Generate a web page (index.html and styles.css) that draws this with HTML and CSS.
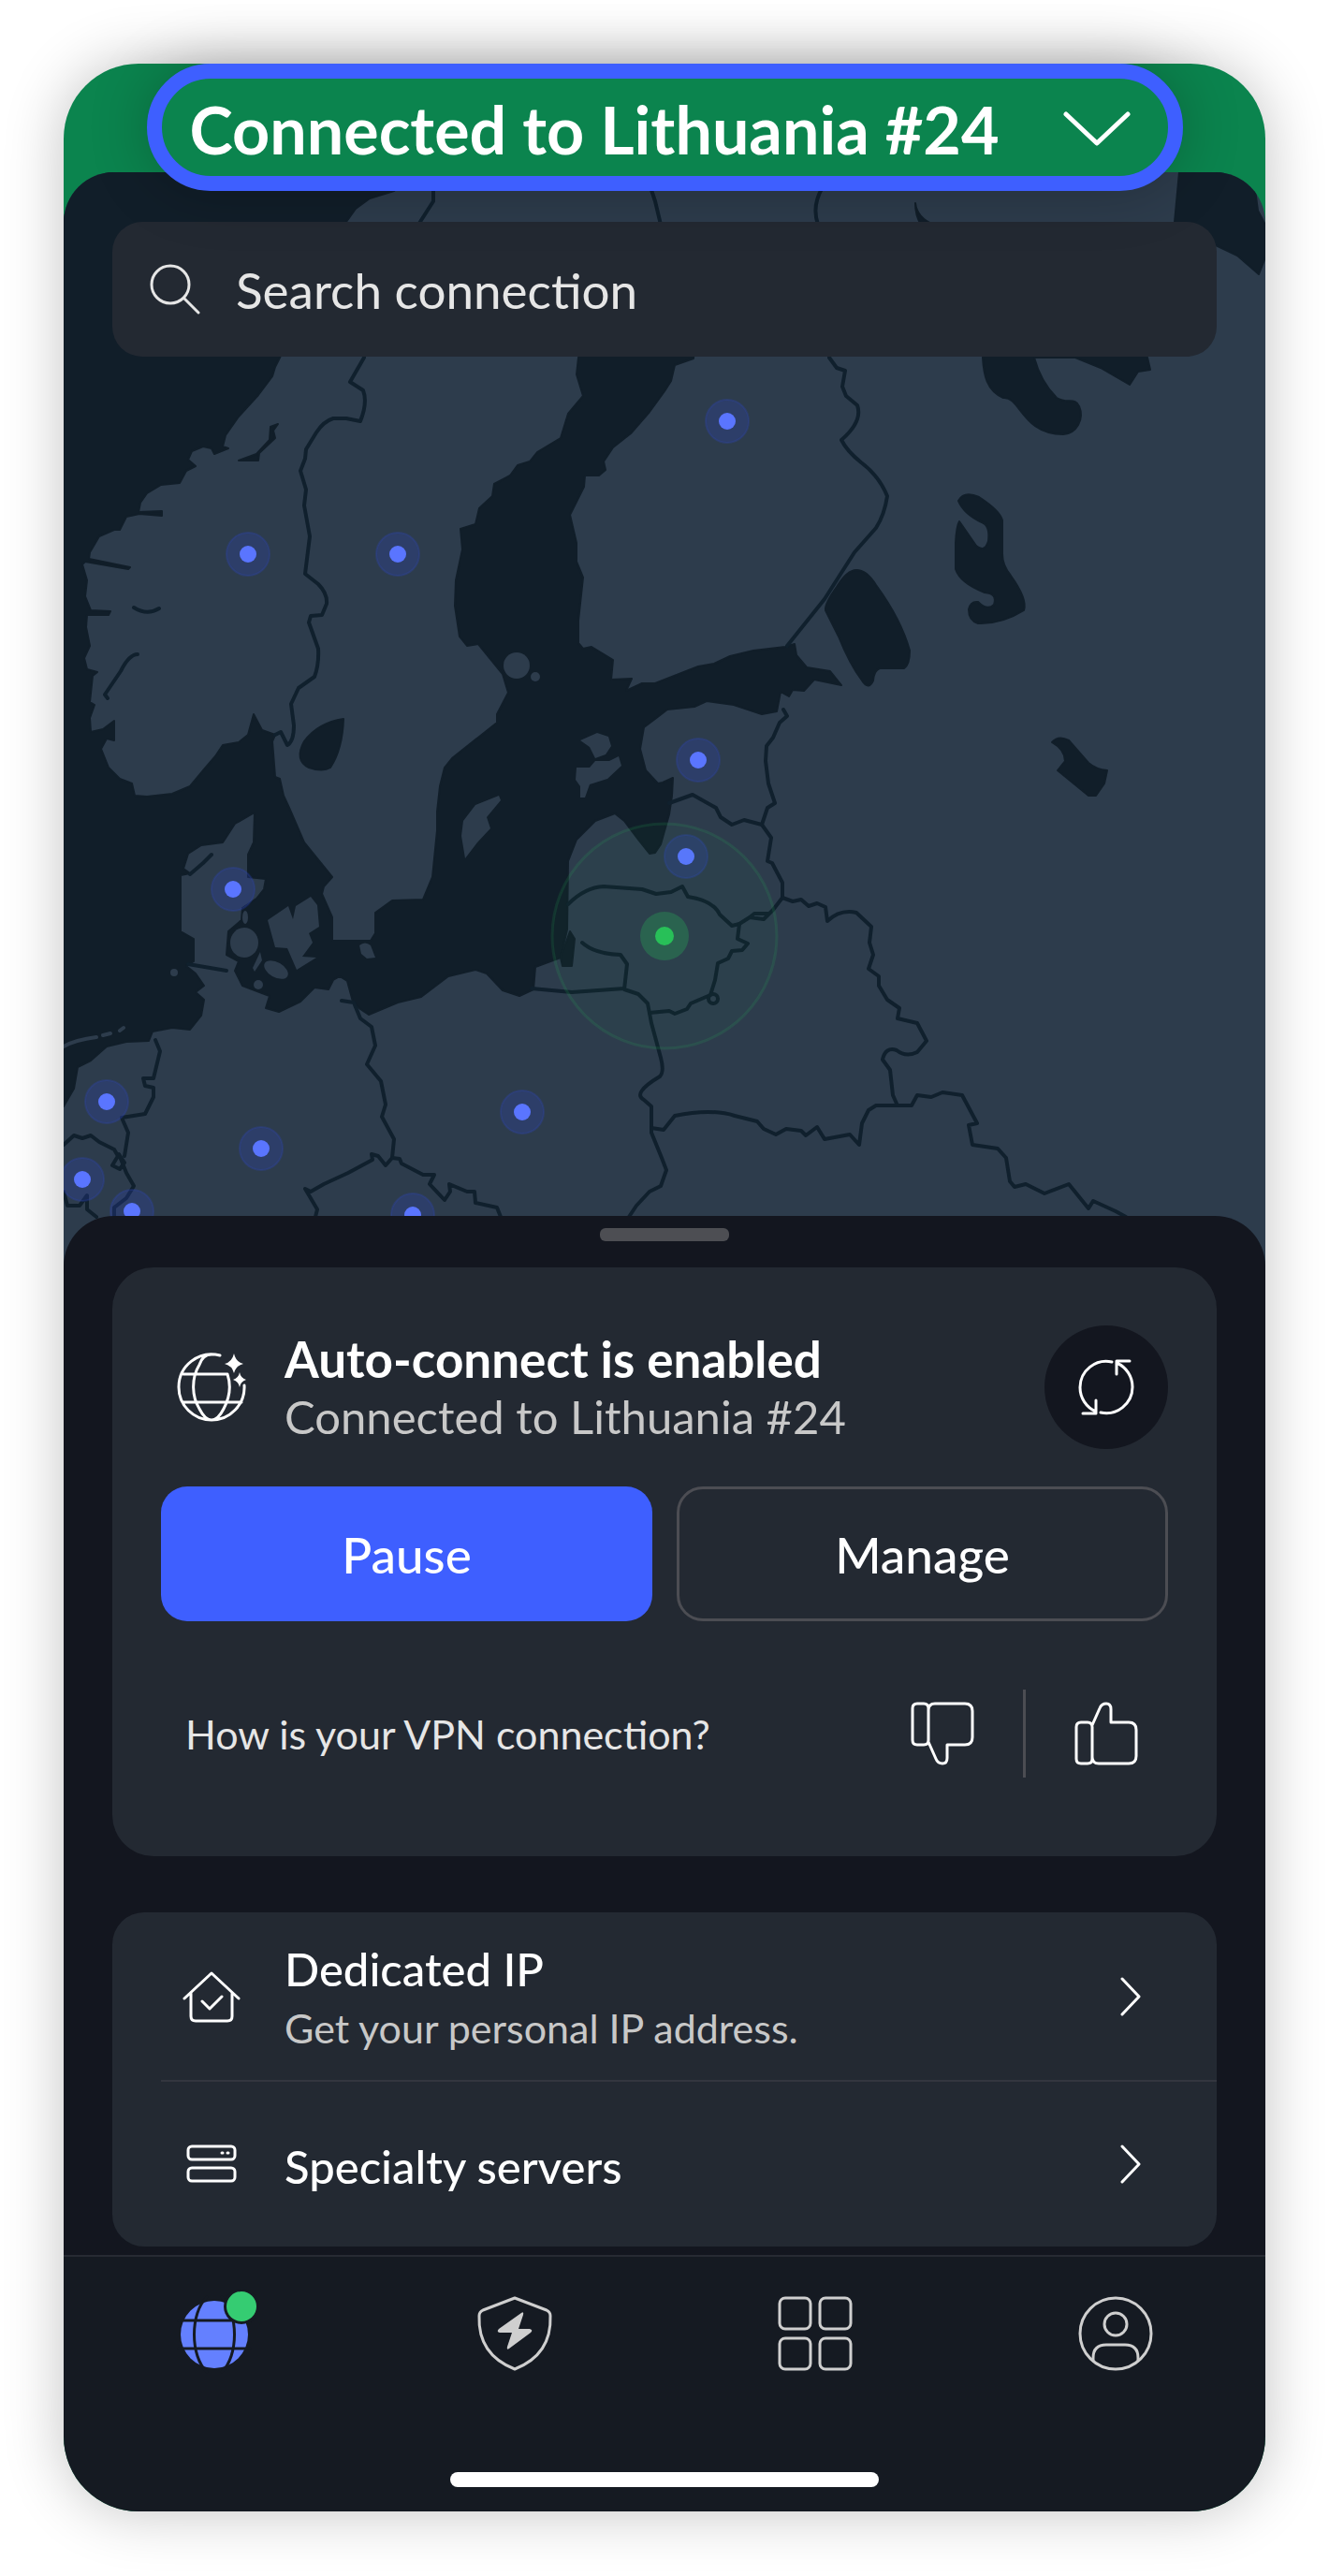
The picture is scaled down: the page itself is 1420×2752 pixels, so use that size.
FILE: index.html
```html
<!DOCTYPE html>
<html lang="en">
<head>
    <meta charset="UTF-8">
    <meta name="viewport" content="width=device-width, initial-scale=1.0">
    <title>VPN connection</title>
    <link rel="stylesheet" href="styles.css">
</head>
<body>

    <div class="phone">
        <header class="header">
            <button class="status" type="button">
                <span>Connected to Lithuania #24</span>
                <svg class="status-arrow" viewBox="0 0 72 40" aria-hidden="true"><path d="M3 4 36 35 69 4"/></svg>
            </button>
        </header>

        <main>
            <section class="map-area">
                <svg class="map" viewBox="68 184 1284 1169" role="img" aria-label="Server map">
                    <!-- sea -->
                    <path class="sea" d="M68 184H440L421 204 395 212 380 223 370 237 330 310 299 382 294 392 291 402 276 422 255 445 241 465 238 477 244 479 229 485 226 479 217 477 205 482 201 491 209 498 199 503 192 516 172 518 157 527 150 537 148 547 173 546 173 551 149 549 135 552 128 566 122 566 106 573 96 590 95 597 139 606 137 608 91 600 88 603 93 620 91 637 97 652 118 653 116 657 93 657 92 670 96 690 90 703 93 715 104 718 99 722 96 750 101 753 96 767 97 782 110 779 122 770 122 791 114 789 108 800 116 820 128 832 141 837 144 850 157 851 184 848 203 840 218 822 230 808 238 796 255 793 265 785 271 763 280 780 294 785 291 792 294 830 299 832 303 850 309 863 325 900 355 937 346 947 344 955 355 980 355 1005H396L401 997V975L419 962 452 961 462 937 467 887V867L470 840 475 820 483 810 531 772V763L543 740 537 720 511 688 499 690 491 680 486 647 487 620 494 587 492 565 508 560 512 543 526 530 528 517 545 508 553 497 566 493 574 483 599 468 607 442 623 423 616 400 618 382 640 340 700 310 745 340 741 383 721 390 717 407 710 418 694 440 674 463 655 478 645 493 647 502 640 508 625 508 624 520 609 550 616 580V600L623 617 618 663V687L623 693 632 691 655 705 653 726 675 725 669 738 686 730 700 730 746 712 763 709 780 701 805 695 839 691 849 688 851 700 862 713 887 717 899 732 870 726 859 738 847 737 843 744 834 739 830 760 814 763 784 753 755 749 742 755 713 758 700 768 688 777 684 800 690 823 703 837 708 836 719 831 718 850 715 870 706 902 700 911 694 912 682 897 667 877 657 869 636 877 616 897 607 920 606 993 599 1023 572 1033 570 1057 555 1064 537 1058 520 1040 508 1036 479 1043 450 1065 425 1071 394 1084 385 1078 377 1070 371 1048 363 1043 356 1047 351 1057 336 1055 321 1070 298 1081 284 1077 288 1064 280 1061 259 1053 251 1037 255 1027 242 1020 244 995 258 983 259 970 274 960 282 950 284 939 265 937V913L271 900 272 868 251 880 238 900 215 903 201 912 196 928 203 933 193 935V995L207 1003V1027L199 1032 209 1040 218 1053 209 1060 218 1068 215 1085 203 1100 184 1098 163 1102 159 1112 135 1113 114 1118 97 1133 83 1140 79 1163 68 1182Z"/>
                    <path class="sea" d="M1260 184 1255 237 1299 262 1322 273 1345 293 1352 275V240L1344 225 1340 195 1335 184Z"/>
                    <path class="sea" d="M1050 382C1051 400 1054 417 1072 425 1090 423 1092 464 1136 464 1150 463 1159 448 1153 434 1149 424 1140 432 1129 425 1116 412 1109 397 1105 382L1149 382 1176 393 1207 411 1216 397 1229 395 1226 382 1200 340H1060Z"/>
                    <path class="sea" d="M978 217Q980 233 998 240H984Q978 230 978 217Z"/>

                    <!-- lakes and fjords -->
                    <path class="sea" d="M367 768Q340 772 325 792 314 812 330 820 345 825 353 820 366 800 367 768Z"/>
                    <path class="sea" d="M915 609Q926 609 936 625 963 662 972 695 972 710 966 714H940Q934 716 933 727 928 738 921 727 908 710 896 680L882 652Q881 645 894 627 905 609 915 609Z"/>
                    <path class="sea" d="M1024 535Q1030 524 1046 531 1069 546 1071 556V592Q1071 604 1080 615 1098 640 1094 652 1070 667 1045 666 1035 663 1035 651 1037 642 1045 643 1055 653 1062 646 1066 634 1052 633 1026 623 1021 608V580Q1022 562 1025 557L1043 583Q1052 591 1056 578 1058 561 1049 558 1030 549 1024 535Z"/>
                    <path class="sea" d="M1124 793Q1131 785 1142 791L1163 815Q1171 822 1183 823L1180 837 1171 850H1163L1130 823 1138 813Q1138 801 1124 793Z"/>
                    <path class="sea" d="M609 995 614 1003 611 1032H601L599 1023Z"/>
                    <path class="sea" d="M297 453 289 456 288 470 274 485 255 492 276 492 277 484 294 468 292 460Z"/>
                    <path class="inlet" d="M147 699Q138 699 129 717L112 742 115 746M143 649Q157 658 170 650M203 934 217 922 226 913"/>

                    <!-- islands -->
                    <g class="land">
                        <circle cx="552" cy="711" r="14"/>
                        <circle cx="572" cy="723" r="5"/>
                        <path d="M620 791 638 783 650 787 653 797 647 806 636 810 630 798ZM616 820 630 820 636 813 651 813 661 808 664 818 649 832 630 838 625 852H620V840L615 833Z"/>
                        <path d="M533 850 508 860 495 877 493 893 497 917 510 900 524 885 520 873 535 855Z"/>
                        <path d="M384 1010Q390 1005 396 1010L401 1023 392 1024 386 1019Z"/>
                        <path d="M286 983 308 968 313 982 316 968 332 958 339 967 341 990 330 997 334 1007 323 1022 338 1023 317 1036 307 1013 294 1012Z"/>
                        <ellipse cx="261" cy="1007" rx="15" ry="16"/>
                        <ellipse cx="295" cy="1036" rx="14" ry="8" transform="rotate(30 295 1036)"/>
                        <ellipse cx="262" cy="980" rx="3" ry="7"/>
                        <path d="M278 1017 280 1026 272 1038 270 1034Z"/>
                        <circle cx="276" cy="1052" r="5"/>
                        <circle cx="186" cy="1039" r="4"/>
                    </g>
                    <path class="sandbar" d="M68 1118Q80 1111 103 1108M110 1106 118 1104M128 1101 132 1098"/>

                    <!-- borders -->
                    <path class="border" d="M389 382 374 408 388 417Q393 430 385 450L370 447H356Q346 450 338 462L327 480 326 490 321 503 327 523 325 540 331 573 326 613 340 624Q350 634 349 645L344 657 332 658 330 665 340 693Q341 710 336 723L319 735 311 752 314 775Q314 792 307 796L300 782 294 785"/>
                    <path class="border" d="M463 200V215L447 240M695 200 700 215 706 240M879 200Q867 220 874 240"/>
                    <path class="border" d="M886 382 894 393 903 396 900 413 904 423 916 433Q922 450 899 470 905 482 920 494 939 508 948 530 945 550 936 564L913 590 881 640 841 690"/>
                    <path class="border" d="M837 758 841 765 833 772 826 788 819 797 818 813 821 837 828 858 820 863 814 881 824 895 820 920 825 922 836 943V959"/>
                    <path class="border" d="M715 858 740 849 765 863 770 873 782 881 795 876 814 881"/>
                    <path class="border" d="M607 966Q625 948 645 947L686 950 701 955 717 953 729 947 735 958Q762 962 769 977L782 989 790 987 801 980 816 982 826 972 836 959M801 980 806 976 822 976"/>
                    <path class="border" d="M790 987 788 1003 799 1008 793 1015 782 1016 778 1024 767 1029 764 1047 759 1063 738 1072 734 1078 721 1083 715 1080 694 1082"/>
                    <circle class="border" cx="762" cy="1067" r="5"/>
                    <path class="border" d="M622 1007Q635 1019 663 1020L670 1030 667 1057 682 1062 692 1072 696 1093 706 1130Q710 1145 705 1150 675 1168 688 1175L696 1182V1210L707 1237 712 1250 706 1267 694 1273 680 1288 672 1300M568 1056 611 1060 667 1056"/>
                    <path class="border" d="M836 959 847 963 856 961 864 968 873 965 882 969 884 984Q898 971 915 975L931 990 929 1007 933 1020 928 1035 939 1043V1053L948 1068 961 1077 959 1088 980 1093 990 1112 980 1124Q968 1130 958 1122 946 1118 943 1132L951 1143 954 1170 958 1179"/>
                    <path class="border" d="M696 1205 709 1207 721 1192Q760 1184 785 1192L809 1198 816 1206 829 1212 840 1206 856 1208 861 1213 873 1204 881 1217 908 1212 918 1223 921 1200 928 1186 936 1181 974 1181 980 1170 995 1172 1007 1167 1028 1170 1044 1200 1035 1202 1039 1223 1066 1227 1075 1237 1079 1262 1084 1268 1096 1265 1116 1275 1142 1265 1163 1291 1168 1283 1192 1294 1203 1300"/>
                    <path class="border" d="M365 1069 378 1071 385 1088 397 1097 401 1117 392 1137 407 1155 412 1180 408 1193 421 1217 419 1237 412 1245 404 1235 397 1233 398 1239 372 1253 346 1265 332 1273 326 1270 339 1292 337 1300"/>
                    <path class="border" d="M419 1237 427 1238 429 1243 452 1255H464L459 1265 475 1282 481 1273 480 1265 499 1273H507L508 1285 531 1290 535 1300"/>
                    <path class="border" d="M201 1030 242 1037M166 1111 171 1123 164 1152H153L155 1160 164 1162V1172L155 1190 130 1194 137 1210 133 1235"/>
                    <path class="border" d="M68 1223 79 1213 88 1216 97 1213 106 1220 122 1228 126 1235 120 1245 128 1249 133 1242 127 1233 135 1253 143 1267 135 1280 122 1290V1300M68 1273 72 1288H85L93 1277V1292L103 1300"/>

                    <!-- servers -->
                    <g class="pin">
                        <circle cx="265" cy="592" r="23"/><circle cx="265" cy="592" r="9"/>
                        <circle cx="425" cy="592" r="23"/><circle cx="425" cy="592" r="9"/>
                        <circle cx="777" cy="450" r="23"/><circle cx="777" cy="450" r="9"/>
                        <circle cx="746" cy="812" r="23"/><circle cx="746" cy="812" r="9"/>
                        <circle cx="249" cy="950" r="23"/><circle cx="249" cy="950" r="9"/>
                        <circle cx="114" cy="1177" r="23"/><circle cx="114" cy="1177" r="9"/>
                        <circle cx="279" cy="1227" r="23"/><circle cx="279" cy="1227" r="9"/>
                        <circle cx="88" cy="1260" r="23"/><circle cx="88" cy="1260" r="9"/>
                        <circle cx="141" cy="1294" r="23"/><circle cx="141" cy="1294" r="9"/>
                        <circle cx="558" cy="1188" r="23"/><circle cx="558" cy="1188" r="9"/>
                        <circle cx="441" cy="1298" r="23"/><circle cx="441" cy="1298" r="9"/>
                        <circle cx="733" cy="915" r="23"/><circle cx="733" cy="915" r="9"/>
                    </g>
                    <circle class="range" cx="710" cy="1000" r="120"/>
                    <circle class="active-halo" cx="710" cy="1000" r="26"/>
                    <circle class="active-dot" cx="710" cy="1000" r="10"/>
                </svg>

                <label class="search">
                    <svg class="search-icon" viewBox="0 0 54 54" aria-hidden="true"><circle cx="22" cy="22" r="20"/><path d="M37 37 52 52"/></svg>
                    <input type="text" placeholder="Search connection" aria-label="Search connection">
                </label>
            </section>

            <section class="sheet">
                <div class="handle"></div>

                <div class="card connection">
                    <div class="connection-top">
                        <svg class="icon" viewBox="0 0 76 76" aria-hidden="true">
                            <path d="M47 4A35 35 0 0 0 3 38 35 35 0 0 0 38 73 35 35 0 0 0 73 36M38 3C31 3 27 8 25 14 16 29 17 48 25 61 33 77 43 77 51 61 58 48 59 36 55 24H8M7 54H70"/>
                            <path class="solid" d="M62 2Q64 11 72 13 64 15 62 23 60 15 52 13 60 11 62 2ZM68 22Q69 28 75 30 69 32 68 38 67 32 61 30 67 28 68 22Z"/>
                        </svg>
                        <div class="connection-text">
                            <h1>Auto-connect is enabled</h1>
                            <p>Connected to Lithuania #24</p>
                        </div>
                        <button class="refresh" type="button" aria-label="Reconnect">
                            <svg viewBox="0 0 62 62" aria-hidden="true"><path d="M37 4A28 28 0 0 0 3 31 28 28 0 0 0 20 57M6 59H20V45M25 58A28 28 0 0 0 59 31 28 28 0 0 0 42 5M56 3H42V17"/></svg>
                        </button>
                    </div>

                    <div class="actions">
                        <button class="btn btn-primary" type="button">Pause</button>
                        <button class="btn btn-outline" type="button">Manage</button>
                    </div>

                    <div class="rating">
                        <p>How is your VPN connection?</p>
                        <button class="rate" type="button" aria-label="Bad">
                            <svg viewBox="0 0 68 68" aria-hidden="true"><path d="M7 2H14Q19 2 19 7V41Q19 46 14 46H7Q2 46 2 41V7Q2 2 7 2ZM19 9Q19 2 26 2H58Q66 2 66 10V38Q66 46 58 46H39V60Q39 66 34 66 29 66 27 61L19 43"/></svg>
                        </button>
                        <span class="rate-line"></span>
                        <button class="rate" type="button" aria-label="Good">
                            <svg viewBox="0 0 68 68" aria-hidden="true"><path d="M7 66H14Q19 66 19 61V27Q19 22 14 22H7Q2 22 2 27V61Q2 66 7 66ZM19 59Q19 66 26 66H58Q66 66 66 58V30Q66 22 58 22H39V8Q39 2 34 2 29 2 27 7L19 25"/></svg>
                        </button>
                    </div>
                </div>

                <div class="card list">
                    <a class="row" href="#">
                        <svg class="icon" viewBox="0 0 76 76" aria-hidden="true"><path d="M9 40 38 13 67 40M16 34V59Q16 64 21 64H55Q60 64 60 59V34M28 43 36 51 49 38"/></svg>
                        <span class="row-text">
                            <span class="row-title">Dedicated IP</span>
                            <span class="row-sub">Get your personal IP address.</span>
                        </span>
                        <svg class="arrow" viewBox="0 0 24 42" aria-hidden="true"><path d="M3 2 21 21 3 40"/></svg>
                    </a>
                    <a class="row" href="#">
                        <svg class="icon" viewBox="0 0 76 76" aria-hidden="true">
                            <rect x="13" y="19" width="50" height="14" rx="4"/><rect x="13" y="42" width="50" height="14" rx="4"/>
                            <path d="M49 26H50M55 26H56"/>
                        </svg>
                        <span class="row-text">
                            <span class="row-title">Specialty servers</span>
                        </span>
                        <svg class="arrow" viewBox="0 0 24 42" aria-hidden="true"><path d="M3 2 21 21 3 40"/></svg>
                    </a>
                </div>
            </section>
        </main>

        <footer class="footer">
            <nav class="tabs">
                <a href="#" aria-label="VPN">
                    <svg class="tab-icon tab-active" viewBox="0 0 80 80" aria-hidden="true">
                        <circle class="globe" cx="40" cy="41" r="36"/>
                        <path d="M2 26H78M2 56H78M32 1C14 18 14 64 32 81M48 1C66 18 66 64 48 81"/>
                        <circle class="cut" cx="69" cy="11" r="19"/>
                        <circle class="online" cx="69" cy="11" r="16"/>
                    </svg>
                </a>
                <a href="#" aria-label="Threat protection">
                    <svg class="tab-icon" viewBox="0 0 80 80" aria-hidden="true">
                        <path d="M40 2 74 15Q78 17 78 21C79 46 68 67 40 78 12 67 1 46 2 21Q2 17 6 15Z"/>
                        <path class="solid" d="M47 18Q50 16 49 20L44 35H56Q60 36 57 39L34 56Q31 58 32 54L37 39H24Q20 38 23 35Z"/>
                    </svg>
                </a>
                <a href="#" aria-label="Products">
                    <svg class="tab-icon" viewBox="0 0 80 80" aria-hidden="true">
                        <rect x="2" y="2" width="33" height="33" rx="6"/><rect x="45" y="2" width="33" height="33" rx="6"/>
                        <rect x="2" y="45" width="33" height="33" rx="6"/><rect x="45" y="45" width="33" height="33" rx="6"/>
                    </svg>
                </a>
                <a href="#" aria-label="Profile">
                    <svg class="tab-icon" viewBox="0 0 80 80" aria-hidden="true">
                        <circle cx="40" cy="40" r="38"/><circle cx="40" cy="30" r="12"/>
                        <path d="M16 69V66Q16 52 30 52H50Q64 52 64 66V69"/>
                    </svg>
                </a>
            </nav>
            <div class="home-bar"></div>
        </footer>
    </div>

</body>
</html>
```
FILE: styles.css
```css
* {
    box-sizing: border-box;
}

body {
    margin: 0;
    padding: 68px;
    background-color: #fff;
    font-family: Lato, sans-serif;
    color: #fff;
}

h1, p {
    margin: 0;
}

button {
    padding: 0;
    border: none;
    background: none;
    color: inherit;
    font-family: inherit;
    cursor: pointer;
}

a {
    color: inherit;
    text-decoration: none;
}

svg {
    display: block;
    flex: none;
    fill: none;
    stroke: currentColor;
    stroke-width: 3px;
    stroke-linecap: round;
    stroke-linejoin: round;
}

.solid {
    fill: currentColor;
    stroke: none;
}

.phone {
    background-color: #0b844e;
    border-radius: 80px;
    box-shadow: 0 0 64px rgba(0, 0, 0, 0.24);
}

/* Header */
.header {
    display: flex;
    justify-content: center;
}

.status {
    position: relative;
    z-index: 2;
    display: flex;
    align-items: center;
    gap: 68px;
    height: 136px;
    padding: 4px 40px 0 30px;
    border: 16px solid #3e5fff;
    border-radius: 68px;
    background-color: #0b844e;
    box-shadow: 0 0 64px rgba(0, 0, 0, 0.24);
    font-size: 70px;
    font-weight: 700;
    white-space: nowrap;
}

.status-arrow {
    width: 72px;
    height: 40px;
    stroke-width: 5px;
}

/* Map */
.map-area {
    display: grid;
    margin-top: -20px;
    border-radius: 54px 54px 0 0;
    background-color: #2d3c4c;
    overflow: hidden;
}

.map {
    grid-area: 1 / 1;
    width: 100%;
    height: auto;
    stroke: none;
}

.sea {
    fill: #111e29;
    stroke: #111e29;
    stroke-width: 2px;
}

.land {
    fill: #2d3c4c;
}

.inlet, .border {
    stroke: #10202d;
    stroke-width: 4px;
}

.sandbar {
    stroke: #2d3c4c;
    stroke-width: 4px;
}

.pin circle {
    fill: #5a75ff;
}

.pin circle:nth-child(odd) {
    fill: rgba(46, 69, 190, 0.26);
    stroke: rgba(46, 69, 190, 0.26);
    stroke-width: 2px;
}

.range {
    fill: rgba(40, 190, 90, 0.03);
    stroke: rgba(40, 190, 90, 0.14);
    stroke-width: 3px;
}

.active-halo {
    fill: rgba(40, 190, 90, 0.28);
}

.active-dot {
    fill: #28c058;
}

.search {
    grid-area: 1 / 1;
    align-self: start;
    display: flex;
    align-items: center;
    gap: 38px;
    height: 144px;
    margin: 53px 52px 0;
    padding: 0 40px;
    border-radius: 32px;
    background-color: #232932;
    z-index: 1;
}

.search-icon {
    width: 54px;
    height: 54px;
    color: #e6e6e6;
}

.search input {
    flex: 1;
    min-width: 0;
    padding: 0;
    border: none;
    outline: none;
    background: none;
    color: #e6e6e6;
    font-family: inherit;
    font-size: 53px;
}

.search input::placeholder {
    color: #e6e6e6;
    opacity: 1;
}

/* Bottom sheet */
.sheet {
    position: relative;
    z-index: 1;
    margin-top: -54px;
    padding: 13px 52px 9px;
    border-radius: 54px 54px 0 0;
    background-color: #13161f;
}

.handle {
    width: 138px;
    height: 14px;
    margin: 0 auto 28px;
    border-radius: 6px;
    background-color: #4d4e53;
}

.card {
    border-radius: 44px;
    background-color: #232932;
}

.connection {
    padding: 62px 52px 84px;
}

.connection-top {
    display: flex;
    align-items: center;
}

.icon {
    width: 76px;
    height: 76px;
}

.connection-top .icon {
    margin: 0 40px 0 16px;
}

.connection-text {
    flex: 1;
}

.connection h1 {
    font-size: 53px;
    font-weight: 700;
    line-height: 62px;
}

.connection-text p {
    color: #c8c8c8;
    font-size: 49px;
    line-height: 60px;
}

.refresh {
    display: grid;
    place-items: center;
    width: 132px;
    height: 132px;
    border-radius: 50%;
    background-color: #13161f;
}

.refresh svg {
    width: 62px;
    height: 62px;
}

.actions {
    display: grid;
    grid-template-columns: 1fr 1fr;
    gap: 26px;
    margin-top: 40px;
}

.btn {
    height: 144px;
    border-radius: 28px;
    font-size: 53px;
    font-weight: 500;
}

.btn-primary {
    background-color: #3e5fff;
}

.btn-outline {
    border: 3px solid #4c4d53;
}

.rating {
    display: flex;
    align-items: center;
    margin: 73px 32px 0 26px;
}

.rating p {
    flex: 1;
    color: #e6e6e6;
    font-size: 43px;
}

.rate svg {
    width: 68px;
    height: 68px;
}

.rate-line {
    width: 3px;
    height: 94px;
    margin: 0 52px;
    background-color: #4c4d53;
}

/* List */
.list {
    margin-top: 60px;
    border-radius: 34px;
}

.row {
    display: flex;
    align-items: center;
    height: 179px;
    margin-left: 52px;
    padding-right: 80px;
}

.row + .row {
    height: 178px;
    border-top: 2px solid #33363f;
}

.row .icon {
    margin: 0 40px 0 16px;
}

.row-text {
    flex: 1;
    padding-top: 4px;
}

.row-title, .row-sub {
    display: block;
}

.row-title {
    font-size: 49px;
    font-weight: 500;
    line-height: 64px;
}

.row-sub {
    color: #c8c8c8;
    font-size: 43px;
    line-height: 64px;
}

.arrow {
    width: 24px;
    height: 42px;
}

/* Tabs */
.footer {
    padding-bottom: 26px;
    border-top: 2px solid #272a33;
    border-radius: 0 0 80px 80px;
    background-color: #151a22;
}

.tabs {
    display: grid;
    grid-template-columns: repeat(4, 1fr);
    justify-items: center;
    padding: 42px 0 108px;
    color: #cfcfcf;
}

.tab-icon {
    width: 80px;
    height: 80px;
    overflow: visible;
}

.globe {
    fill: #6480ff;
    stroke: none;
}

.tab-active path {
    stroke: #151a22;
}

.cut {
    fill: #151a22;
    stroke: none;
}

.online {
    fill: #35cc72;
    stroke: none;
}

.home-bar {
    width: 458px;
    height: 16px;
    margin: 0 auto;
    border-radius: 8px;
    background-color: #fff;
}
```
